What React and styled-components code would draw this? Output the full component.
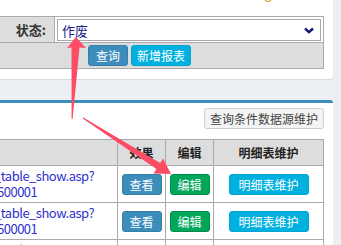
import React from "react";
import styled, { createGlobalStyle } from "styled-components";

const GlobalStyle = createGlobalStyle`
  body {
    margin: 0;
    background: #ecf0f5;
    overflow: hidden;
    font-family: "Noto Sans CJK SC", "Noto Sans", sans-serif;
  }
`;

const Page = styled.div`
  position: relative;
  width: 341px;
  height: 245px;
  overflow: hidden;
`;

const TopPanel = styled.div`
  position: relative;
  width: 333px;
  box-sizing: border-box;
  background: #fff;
  padding: 16px 9px 10px 0;
  border-bottom-right-radius: 3px;
  box-shadow: 0 1px 1px rgba(0, 0, 0, 0.1);
`;

const Ring = styled.div`
  position: absolute;
  top: -6px;
  left: 264px;
  width: 6px;
  height: 6px;
  border: 1px solid #b8960c;
  border-radius: 50%;
`;

const Form = styled.div`
  margin-left: -1px;
  border: 1px solid #aaa;
`;

const FormRow = styled.div`
  display: flex;
  height: 25px;
  background: ${(p) => p.$bg || "#fff"};
  & + & {
    border-top: 1px solid #aaa;
  }
`;

const Label = styled.div`
  width: 55px;
  box-sizing: border-box;
  border-right: 1px solid #aaa;
  background: #dddddd;
  display: flex;
  align-items: center;
  justify-content: flex-end;
  padding-right: 8px;
  font-size: 13px;
  font-weight: bold;
  color: #333;
`;

const SelectWrap = styled.div`
  flex: 1;
  padding: 2px 2px 1px 2px;
`;

const FakeSelect = styled.div`
  height: 22px;
  box-sizing: border-box;
  border: 1px solid #a8a8a8;
  display: flex;
  align-items: center;
  justify-content: space-between;
  padding: 0 6px 0 4px;
  color: #1a1a8a;
  font-size: 13px;
`;

const Buttons = styled.div`
  display: flex;
  align-items: center;
  gap: 3px;
  padding-left: 88px;
`;

const Btn = styled.button`
  width: ${(p) => p.$w}px;
  height: 21px;
  padding: 0;
  border-radius: 3px;
  border: 1px solid ${(p) => p.$border};
  background: ${(p) => p.$bg};
  color: #fff;
  font-family: inherit;
  font-size: 12px;
  line-height: 19px;
`;

const Box = styled.div`
  width: 333px;
  box-sizing: border-box;
  margin-top: 21px;
  background: #fff;
  border-top: 3px solid #3c8dbc;
  border-top-right-radius: 3px;
  padding: 5px 9px 0 0;
  height: 200px;
`;

const Toolbar = styled.div`
  display: flex;
  justify-content: flex-end;
  margin-bottom: 10px;
`;

const PlainBtn = styled.button`
  height: 21px;
  width: 120px;
  padding: 0;
  border-radius: 3px;
  border: 1px solid #cfcfcf;
  background: #f4f4f4;
  color: #444;
  font-family: inherit;
  font-size: 12px;
  line-height: 19px;
`;

const Grid = styled.div`
  margin-left: -1px;
  border-top: 1px solid #aaa;
  border-left: 1px solid #aaa;
  display: grid;
  grid-template-columns: 118px 48px 48px 110px;
`;

const Cell = styled.div`
  box-sizing: border-box;
  height: ${(p) => (p.$head ? 26 : 37)}px;
  border-right: 1px solid #aaa;
  border-bottom: 1px solid #aaa;
  background: ${(p) => (p.$head ? "#dddddd" : "#fff")};
  display: flex;
  flex-direction: column;
  align-items: ${(p) => (p.$left ? "flex-start" : "center")};
  justify-content: center;
  overflow: hidden;
  font-size: 12px;
  font-weight: ${(p) => (p.$head ? "bold" : "normal")};
  color: #222;
`;

const Link = styled.div`
  margin-left: ${(p) => p.$shift}px;
  color: #2f2fd0;
  font-size: 13px;
  letter-spacing: -0.5px;
  line-height: 16px;
  white-space: nowrap;
`;

const Overlay = styled.svg`
  position: absolute;
  top: 0;
  left: 0;
  pointer-events: none;
`;

const Chevron = () => (
  <svg width="10" height="7" viewBox="0 0 10 7">
    <path d="M1 1.5 L5 5.2 L9 1.5" fill="none" stroke="#14147a" strokeWidth="2.4" />
  </svg>
);

const rows = [1, 2, 3];

export default function App() {
  return (
    <Page>
      <GlobalStyle />
      <TopPanel>
        <Ring />
        <Form>
          <FormRow>
            <Label>状态:</Label>
            <SelectWrap>
              <FakeSelect>
                <span>作废</span>
                <Chevron />
              </FakeSelect>
            </SelectWrap>
          </FormRow>
          <FormRow $bg="#dddddd">
            <Buttons>
              <Btn $w={40} $bg="#3c8dbc" $border="#367fa9">查询</Btn>
              <Btn $w={60} $bg="#00b0df" $border="#00a6d2">新增报表</Btn>
            </Buttons>
          </FormRow>
        </Form>
      </TopPanel>
      <Box>
        <Toolbar>
          <PlainBtn>查询条件数据源维护</PlainBtn>
        </Toolbar>
        <Grid>
          <Cell $head />
          <Cell $head>效果</Cell>
          <Cell $head>编辑</Cell>
          <Cell $head>明细表维护</Cell>
          {rows.map((r) => (
            <React.Fragment key={r}>
              <Cell $left>
                <Link $shift={-6}>_table_show.asp?</Link>
                <Link $shift={-3}>600001</Link>
              </Cell>
              <Cell>
                <Btn $w={40} $bg="#3c8dbc" $border="#367fa9">查看</Btn>
              </Cell>
              <Cell>
                <Btn $w={40} $bg="#00a65a" $border="#008d4c">编辑</Btn>
              </Cell>
              <Cell>
                <Btn $w={80} $bg="#00b0df" $border="#00a6d2">明细表维护</Btn>
              </Cell>
            </React.Fragment>
          ))}
        </Grid>
      </Box>
      <Overlay width="341" height="245" viewBox="0 0 341 245">
        <polygon
          fill="#fd4d66"
          points="76,37 86,48 79.5,47.5 72.6,119 71.6,119 71.5,47.5 67,48"
        />
        <polygon
          fill="#fd4d66"
          points="83.3,117.6 160.2,163 163.1,158.4 171,174 153.5,173.6 156.4,169 82.7,118.4"
        />
      </Overlay>
    </Page>
  );
}
